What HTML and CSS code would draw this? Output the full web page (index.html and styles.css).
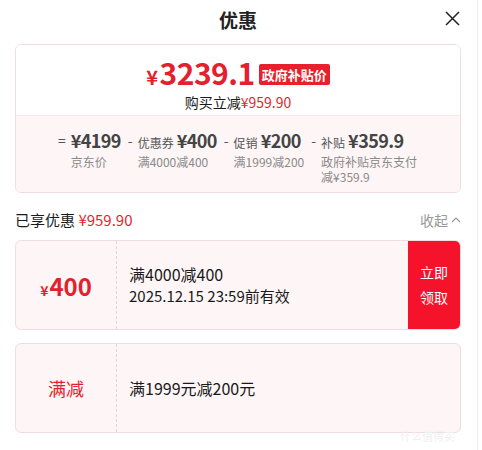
FILE: index.html
```html
<!DOCTYPE html>
<html lang="zh-CN">
<head>
  <meta charset="UTF-8">
  <title>优惠</title>
  <link rel="stylesheet" href="styles.css">
</head>
<body>
  <div class="panel">
    <div class="header">
      <span class="title">优惠</span>
      <span class="close">
        <svg width="15" height="15" viewBox="0 0 15 15"><path d="M1 1L14 14M14 1L1 14" stroke="#222" stroke-width="1.5" fill="none"/></svg>
      </span>
    </div>

    <div class="summary">
      <div class="summary-top">
        <div class="final">
          <span class="final-price"><span class="yen">¥</span>3239.1</span>
          <span class="badge">政府补贴价</span>
        </div>
        <div class="saved">购买立减<span class="red">¥959.90</span></div>
      </div>
      <div class="summary-bottom">
        <div class="calc">
          <div class="calc-item">
            <span class="op">=</span>
            <div class="calc-body">
              <div class="calc-line"><span class="val">¥4199</span></div>
              <div class="calc-desc">京东价</div>
            </div>
          </div>
          <div class="calc-item">
            <span class="op">-</span>
            <div class="calc-body">
              <div class="calc-line"><span class="lbl">优惠券</span><span class="val">¥400</span></div>
              <div class="calc-desc">满4000减400</div>
            </div>
          </div>
          <div class="calc-item">
            <span class="op">-</span>
            <div class="calc-body">
              <div class="calc-line"><span class="lbl">促销</span><span class="val">¥200</span></div>
              <div class="calc-desc">满1999减200</div>
            </div>
          </div>
          <div class="calc-item">
            <span class="op">-</span>
            <div class="calc-body">
              <div class="calc-line"><span class="lbl">补贴</span><span class="val">¥359.9</span></div>
              <div class="calc-desc narrow">政府补贴京东支付减¥359.9</div>
            </div>
          </div>
        </div>
      </div>
    </div>

    <div class="enjoy">
      <span>已享优惠 <span class="red">¥959.90</span></span>
      <span class="fold">收起
        <svg width="10" height="7" viewBox="0 0 10 7"><path d="M1 6L5 2L9 6" stroke="#999" stroke-width="1.2" fill="none"/></svg>
      </span>
    </div>

    <div class="coupon">
      <div class="coupon-left"><span class="amount"><span class="small-yen">¥</span>400</span></div>
      <div class="coupon-main">
        <div class="coupon-title">满4000减400</div>
        <div class="coupon-date">2025.12.15 23:59前有效</div>
      </div>
      <div class="coupon-btn">立即<br>领取</div>
    </div>

    <div class="coupon">
      <div class="coupon-left"><span class="tag">满减</span></div>
      <div class="coupon-main">
        <div class="coupon-title">满1999元减200元</div>
      </div>
    </div>

    <div class="watermark">什么值得买</div>
  </div>
</body>
</html>
```

FILE: styles.css
```css
:root {
  --red: #e41f2e;
  --btn-red: #f5132b;
  --text: #1a1a1a;
  --gray: #8a8a8a;
  --border: #f1dde1;
  --pink-bg: #fdf5f6;
}

body {
  margin: 0;
  padding: 0;
  background: #fff;
  font-family: "Noto Sans CJK SC", "Noto Sans", sans-serif;
  color: var(--text);
}

.panel {
  width: 446px;
  height: 450px;
  padding: 0 16px 0 15px;
  border-right: 1px solid #ececec;
  position: relative;
  overflow: hidden;
}

.header {
  height: 38px;
  display: flex;
  align-items: center;
  justify-content: center;
  position: relative;
}

.title {
  font-size: 19px;
  font-weight: 700;
  color: #222;
}

.close {
  position: absolute;
  right: 1px;
  top: 11px;
  line-height: 0;
}

.summary {
  margin-top: 6px;
  border: 1px solid var(--border);
  border-radius: 6px;
  overflow: hidden;
}

.summary-top {
  height: 70px;
  display: flex;
  flex-direction: column;
  align-items: center;
  background: #fff;
}

.final {
  display: flex;
  align-items: center;
  margin-top: 14px;
  height: 30px;
}

.final-price {
  color: var(--red);
  font-size: 30px;
  font-weight: 700;
  letter-spacing: -0.5px;
  line-height: 30px;
}

.yen {
  font-size: 20px;
  margin-right: 2px;
}

.badge {
  background: #e81f2c;
  color: #fff;
  font-size: 13px;
  font-weight: 700;
  padding: 0 3px;
  height: 21px;
  line-height: 21px;
  border-radius: 2px;
  margin-left: 4px;
  margin-top: 1px;
}

.saved {
  font-size: 14px;
  line-height: 20px;
  margin-top: 3px;
}

.red {
  color: var(--red);
}

.summary-bottom {
  background: var(--pink-bg);
  border-top: 1px solid #f7e8ea;
  padding: 12px 0 8px;
}

.calc {
  display: flex;
  justify-content: center;
  gap: 7px;
}

.calc-item {
  display: flex;
  gap: 5px;
}

.op {
  font-size: 14px;
  color: #555;
  line-height: 24px;
}

.calc-line {
  display: flex;
  align-items: baseline;
  gap: 3px;
  height: 24px;
}

.lbl {
  font-size: 12px;
  color: #555;
  line-height: 24px;
}

.val {
  font-size: 18px;
  font-weight: 700;
  color: #444;
  line-height: 24px;
  letter-spacing: -0.6px;
}

.calc-desc {
  font-size: 12px;
  color: var(--gray);
  line-height: 15px;
  margin-top: 2px;
}

.calc-desc.narrow {
  width: 97px;
}

.enjoy {
  display: flex;
  justify-content: space-between;
  align-items: center;
  height: 47px;
  padding-top: 6px;
  box-sizing: border-box;
  font-size: 15px;
}

.fold {
  color: #999;
  font-size: 14px;
  display: flex;
  align-items: center;
  gap: 3px;
}

.coupon {
  display: flex;
  height: 88px;
  border: 1px solid var(--border);
  border-radius: 6px;
  background: var(--pink-bg);
  overflow: hidden;
  margin-bottom: 13px;
}

.coupon-left {
  width: 100px;
  border-right: 1px dashed #ead3d8;
  display: flex;
  align-items: center;
  justify-content: center;
  color: var(--red);
}

.amount {
  font-size: 24px;
  font-weight: 700;
}

.small-yen {
  font-size: 14px;
  margin-right: 1px;
}

.tag {
  font-size: 18px;
}

.coupon-main {
  flex: 1;
  display: flex;
  flex-direction: column;
  justify-content: center;
  padding-left: 12px;
}

.coupon-title {
  font-size: 16px;
  line-height: 21px;
}

.coupon-date {
  font-size: 15px;
  line-height: 21px;
}

.coupon-btn {
  width: 52px;
  background: var(--btn-red);
  color: #fff;
  font-size: 14px;
  line-height: 25px;
  display: flex;
  align-items: center;
  justify-content: center;
  text-align: center;
}

.watermark {
  position: absolute;
  right: 22px;
  bottom: 6px;
  font-size: 11px;
  color: #f0f0f0;
}
```
